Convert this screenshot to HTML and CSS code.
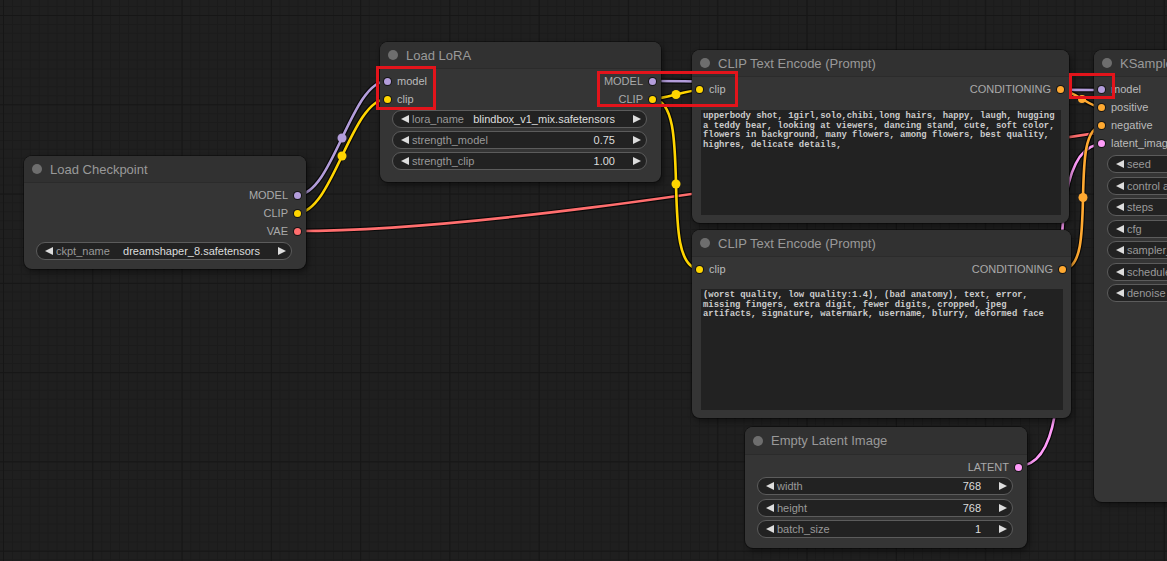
FILE: index.html
```html
<!DOCTYPE html>
<html lang="en">
<head>
    <meta charset="UTF-8">
    <title>ComfyUI Workflow</title>
    <link rel="stylesheet" href="styles.css">
</head>
<body>

<div class="canvas">

    <!-- links between nodes -->
    <svg class="links" width="1167" height="561" viewBox="0 0 1167 561">
        <g class="link vae">
            <path class="edge" d="M297,231 C623,231 1274,80 1600,80"/>
            <path class="line" d="M297,231 C623,231 1274,80 1600,80"/>
        </g>
        <g class="link model">
            <path class="edge" d="M297,195 C333,195 351,81 387,81"/>
            <path class="line" d="M297,195 C333,195 351,81 387,81"/>
            <circle cx="342" cy="138" r="4.5"/>
        </g>
        <g class="link clip">
            <path class="edge" d="M297,213 C333,213 351,99 387,99"/>
            <path class="line" d="M297,213 C333,213 351,99 387,99"/>
            <circle cx="342" cy="156" r="4.5"/>
        </g>
        <g class="link model">
            <path class="edge" d="M652,81 C765,81 990,90 1103,90"/>
            <path class="line" d="M652,81 C765,81 990,90 1103,90"/>
        </g>
        <g class="link clip">
            <path class="edge" d="M652,99 C664,99 688,90 700,90"/>
            <path class="line" d="M652,99 C664,99 688,90 700,90"/>
            <circle cx="676" cy="94.5" r="4.5"/>
        </g>
        <g class="link clip">
            <path class="edge" d="M652,99 C696,99 656,269 700,269"/>
            <path class="line" d="M652,99 C696,99 656,269 700,269"/>
            <circle cx="676" cy="184" r="4.5"/>
        </g>
        <g class="link latent">
            <path class="edge" d="M1018,466 C1101,466 1020,144 1103,144"/>
            <path class="line" d="M1018,466 C1101,466 1020,144 1103,144"/>
        </g>
        <g class="link cond">
            <path class="edge" d="M1061,90 C1073,90 1091,108 1103,108"/>
            <path class="line" d="M1061,90 C1073,90 1091,108 1103,108"/>
            <circle cx="1082" cy="99" r="4"/>
        </g>
        <g class="link cond">
            <path class="edge" d="M1063,269 C1100,269 1066,126 1103,126"/>
            <path class="line" d="M1063,269 C1100,269 1066,126 1103,126"/>
            <circle cx="1083" cy="197.5" r="4.5"/>
        </g>
    </svg>

    <!-- Load Checkpoint -->
    <div class="node node-ckpt">
        <div class="node-title"><span class="title-dot"></span>Load Checkpoint</div>
        <div class="slots">
            <div class="slot-col"></div>
            <div class="slot-col">
                <div class="slot out">MODEL<span class="dot c-model"></span></div>
                <div class="slot out">CLIP<span class="dot c-clip"></span></div>
                <div class="slot out">VAE<span class="dot c-vae"></span></div>
            </div>
        </div>
        <div class="widgets">
            <div class="widget"><span class="arr-l"></span><span class="w-label">ckpt_name</span><span class="w-value">dreamshaper_8.safetensors</span><span class="arr-r"></span></div>
        </div>
    </div>

    <!-- Load LoRA -->
    <div class="node node-lora">
        <div class="node-title"><span class="title-dot"></span>Load LoRA</div>
        <div class="slots">
            <div class="slot-col">
                <div class="slot in"><span class="dot c-model"></span>model</div>
                <div class="slot in"><span class="dot c-clip"></span>clip</div>
            </div>
            <div class="slot-col">
                <div class="slot out">MODEL<span class="dot c-model"></span></div>
                <div class="slot out">CLIP<span class="dot c-clip"></span></div>
            </div>
        </div>
        <div class="widgets">
            <div class="widget"><span class="arr-l"></span><span class="w-label">lora_name</span><span class="w-value">blindbox_v1_mix.safetensors</span><span class="arr-r"></span></div>
            <div class="widget"><span class="arr-l"></span><span class="w-label">strength_model</span><span class="w-value">0.75</span><span class="arr-r"></span></div>
            <div class="widget"><span class="arr-l"></span><span class="w-label">strength_clip</span><span class="w-value">1.00</span><span class="arr-r"></span></div>
        </div>
    </div>

    <!-- CLIP Text Encode, positive -->
    <div class="node node-pos">
        <div class="node-title"><span class="title-dot"></span>CLIP Text Encode (Prompt)</div>
        <div class="slots">
            <div class="slot-col">
                <div class="slot in"><span class="dot c-clip"></span>clip</div>
            </div>
            <div class="slot-col">
                <div class="slot out">CONDITIONING<span class="dot c-cond"></span></div>
            </div>
        </div>
        <div class="prompt">upperbody shot, 1girl,solo,chibi,long hairs, happy, laugh, hugging
a teddy bear, looking at viewers, dancing stand, cute, soft color,
flowers in background, many flowers, among flowers, best quality,
highres, delicate details,</div>
    </div>

    <!-- CLIP Text Encode, negative -->
    <div class="node node-neg">
        <div class="node-title"><span class="title-dot"></span>CLIP Text Encode (Prompt)</div>
        <div class="slots">
            <div class="slot-col">
                <div class="slot in"><span class="dot c-clip"></span>clip</div>
            </div>
            <div class="slot-col">
                <div class="slot out">CONDITIONING<span class="dot c-cond"></span></div>
            </div>
        </div>
        <div class="prompt">(worst quality, low quality:1.4), (bad anatomy), text, error,
missing fingers, extra digit, fewer digits, cropped, jpeg
artifacts, signature, watermark, username, blurry, deformed face</div>
    </div>

    <!-- Empty Latent Image -->
    <div class="node node-latent">
        <div class="node-title"><span class="title-dot"></span>Empty Latent Image</div>
        <div class="slots">
            <div class="slot-col"></div>
            <div class="slot-col">
                <div class="slot out">LATENT<span class="dot c-latent"></span></div>
            </div>
        </div>
        <div class="widgets">
            <div class="widget"><span class="arr-l"></span><span class="w-label">width</span><span class="w-value">768</span><span class="arr-r"></span></div>
            <div class="widget"><span class="arr-l"></span><span class="w-label">height</span><span class="w-value">768</span><span class="arr-r"></span></div>
            <div class="widget"><span class="arr-l"></span><span class="w-label">batch_size</span><span class="w-value">1</span><span class="arr-r"></span></div>
        </div>
    </div>

    <!-- KSampler -->
    <div class="node node-ks">
        <div class="node-title"><span class="title-dot"></span>KSampler</div>
        <div class="slots">
            <div class="slot-col">
                <div class="slot in"><span class="dot c-model"></span>model</div>
                <div class="slot in"><span class="dot c-cond"></span>positive</div>
                <div class="slot in"><span class="dot c-cond"></span>negative</div>
                <div class="slot in"><span class="dot c-latent"></span>latent_image</div>
            </div>
        </div>
        <div class="widgets">
            <div class="widget"><span class="arr-l"></span><span class="w-label">seed</span></div>
            <div class="widget"><span class="arr-l"></span><span class="w-label">control after generate</span></div>
            <div class="widget"><span class="arr-l"></span><span class="w-label">steps</span></div>
            <div class="widget"><span class="arr-l"></span><span class="w-label">cfg</span></div>
            <div class="widget"><span class="arr-l"></span><span class="w-label">sampler_name</span></div>
            <div class="widget"><span class="arr-l"></span><span class="w-label">scheduler</span></div>
            <div class="widget"><span class="arr-l"></span><span class="w-label">denoise</span></div>
        </div>
    </div>

    <!-- highlight boxes -->
    <div class="mark mark-1"></div>
    <div class="mark mark-2"></div>
    <div class="mark mark-3"></div>

</div>

</body>
</html>
```

FILE: styles.css
```css
body {
    margin: 0;
    background: #1f1f1f;
    font-family: "Liberation Sans", Arial, sans-serif;
    overflow: hidden;
}
.canvas {
    position: relative;
    width: 1167px;
    height: 561px;
    overflow: hidden;
    background-color: #1f1f1f;
    background-image:
        linear-gradient(#161616 1px, transparent 1px),
        linear-gradient(90deg, #161616 1px, transparent 1px),
        linear-gradient(#1b1b1b 1px, transparent 1px),
        linear-gradient(90deg, #1b1b1b 1px, transparent 1px);
    background-size: 89.3px 89.3px, 89.3px 89.3px, 8.93px 8.93px, 8.93px 8.93px;
    background-position: 3px 15px, 3px 15px, 3px 15px, 3px 15px;
}

/* links */
.links {
    position: absolute;
    left: 0;
    top: 0;
}
.link path {
    fill: none;
}
.link .edge {
    stroke: rgba(0, 0, 0, 0.7);
    stroke-width: 5;
}
.link .line {
    stroke-width: 2.6;
}
.model .line { stroke: #b39ddb; }
.model circle { fill: #b39ddb; }
.clip .line { stroke: #ffd500; }
.clip circle { fill: #ffd500; }
.vae .line { stroke: #ff6e6e; }
.latent .line { stroke: #ff9cf9; }
.cond .line { stroke: #ffa931; }
.cond circle { fill: #ffa931; }

/* nodes */
.node {
    position: absolute;
    background: #353535;
    border-radius: 8px;
    box-shadow: 0 0 0 1px rgba(0, 0, 0, 0.35), 2px 3px 6px rgba(0, 0, 0, 0.45);
}
.node-title {
    height: 27px;
    display: flex;
    align-items: center;
    padding-left: 8px;
    background: #313131;
    border-bottom: 1px solid #2b2b2b;
    border-radius: 8px 8px 0 0;
    color: #999;
    font-size: 13px;
    box-sizing: border-box;
}
.title-dot {
    width: 10px;
    height: 10px;
    border-radius: 50%;
    background: #6e6e6e;
    margin-right: 8px;
}
.slots {
    display: flex;
    justify-content: space-between;
    padding-top: 3px;
}
.slot-col {
    display: flex;
    flex-direction: column;
}
.slot {
    height: 18px;
    display: flex;
    align-items: center;
    gap: 6px;
    font-size: 11px;
}
.slot.in {
    padding-left: 4px;
    color: #bbb;
}
.slot.out {
    padding-right: 5px;
    justify-content: flex-end;
    color: #aaa;
}
.dot {
    width: 7px;
    height: 7px;
    border-radius: 50%;
    box-shadow: 0 0 0 1px rgba(0, 0, 0, 0.6);
}
.c-model { background: #b39ddb; }
.c-clip { background: #ffd500; }
.c-vae { background: #ff6e6e; }
.c-cond { background: #ffa931; }
.c-latent { background: #ff9cf9; }

/* widgets */
.widgets {
    display: flex;
    flex-direction: column;
    gap: 3px;
    margin-top: 2px;
    padding: 0 14px 0 12px;
}
.widget {
    box-sizing: border-box;
    height: 18px;
    display: flex;
    align-items: center;
    border: 1px solid #5c5c5c;
    border-radius: 9px;
    background: #222;
    padding: 0 5px 0 8px;
    font-size: 11px;
}
.w-label {
    color: #999;
    margin-left: 3px;
    flex: 1;
    white-space: nowrap;
}
.w-value {
    color: #ddd;
    margin-right: 18px;
    white-space: nowrap;
}
.arr-l {
    width: 0;
    height: 0;
    border-top: 4.5px solid transparent;
    border-bottom: 4.5px solid transparent;
    border-right: 8px solid #ddd;
}
.arr-r {
    width: 0;
    height: 0;
    border-top: 4.5px solid transparent;
    border-bottom: 4.5px solid transparent;
    border-left: 8px solid #ddd;
}

/* prompt text boxes */
.prompt {
    background: #222;
    margin: 12px 8px 0 9px;
    padding: 2px 2px;
    color: #ccc;
    font-family: "Liberation Mono", "Courier New", monospace;
    font-weight: bold;
    font-size: 8.9px;
    line-height: 9.6px;
    white-space: pre;
    overflow: hidden;
}

/* node positions on the canvas */
.node-ckpt { left: 24px; top: 156px; width: 282px; height: 113px; }
.node-lora { left: 380px; top: 42px; width: 281px; height: 140px; }
.node-pos { left: 692px; top: 50px; width: 377px; height: 173px; }
.node-pos .prompt { height: 101px; }
.node-neg { left: 692px; top: 230px; width: 379px; height: 188px; }
.node-neg .prompt { margin-top: 11px; height: 117px; }
.node-latent { left: 745px; top: 427px; width: 282px; height: 121px; }
.node-latent .node-title { height: 28px; }
.node-latent .widgets { margin-top: 1px; gap: 3.5px; }
.node-ks { left: 1094px; top: 50px; width: 300px; height: 452px; }
.node-ks .widgets { margin-top: 3px; gap: 3.5px; padding-left: 13px; }

/* red highlight boxes */
.mark {
    position: absolute;
    border: 3px solid #e3141b;
}
.mark-1 { left: 376px; top: 66px; width: 54px; height: 38px; }
.mark-2 { left: 597px; top: 71px; width: 135px; height: 30px; }
.mark-3 { left: 1069px; top: 73px; width: 40px; height: 20px; }
```
